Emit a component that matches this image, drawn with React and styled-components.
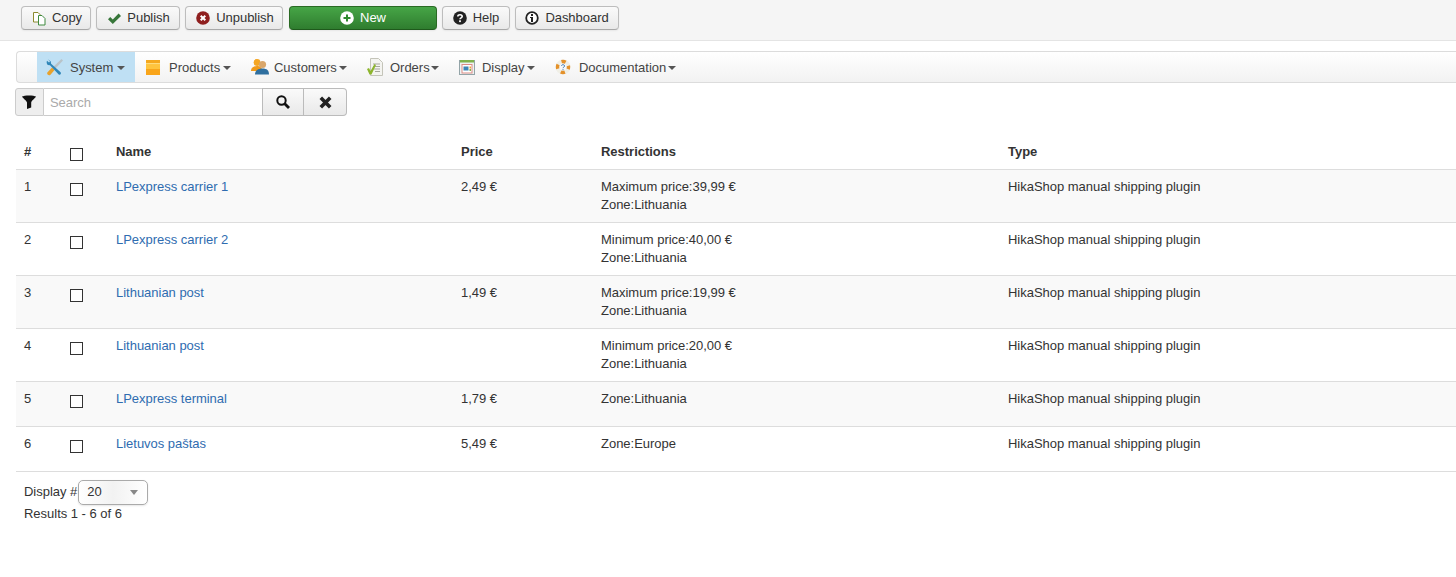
import React from "react";
import styled, { createGlobalStyle } from "styled-components";

const Global = createGlobalStyle`
  html, body { margin: 0; padding: 0; background: #fff; }
  body { font-family: "Liberation Sans", Arial, sans-serif; font-size: 13px; letter-spacing: -.02px; line-height: 18px; color: #333; overflow: hidden; }
  * { box-sizing: border-box; }
`;

const Page = styled.div`width: 1456px; height: 577px; overflow: hidden;`;

const Toolbar = styled.div`
  display: flex; gap: 5px; height: 41px; padding: 6px 0 0 21px;
  background: #f5f5f5; border-bottom: 1px solid #e4e4e4;
`;
const ToolButton = styled.button`
  display: flex; align-items: center; justify-content: center; gap: 6px;
  width: ${p => p.$w}px; height: 24px; padding: 0 0 2px ${p => p.$pl || 0}px; margin-right: ${p => p.$mr || 0}px;
  font: 13px "Liberation Sans", Arial, sans-serif; letter-spacing: -.04px;
  color: ${p => p.$primary ? "#fff" : "#333"};
  border: 1px solid ${p => p.$primary ? "#2a6a24" : "#bdbdbd"};
  border-bottom-color: ${p => p.$primary ? "#1f5a1c" : "#a8a8a8"};
  border-radius: 4px;
  background: ${p => p.$primary ? "linear-gradient(#46a546,#2f7d2f)" : "linear-gradient(#fafafa,#e9e9e9)"};
  box-shadow: 0 1px 2px rgba(0,0,0,.06);
  svg { flex: none; margin-top: 2px; }
`;

const Menu = styled.nav`
  display: flex; align-items: stretch; height: 32px; margin: 10px 0 5px 16px; padding-left: 20px;
  border: 1px solid #dcdcdc; border-right: 0; border-radius: 4px 0 0 4px;
  background: linear-gradient(#fff,#f2f2f2);
`;
const MenuItem = styled.div`
  display: flex; align-items: center; width: ${p => p.$w}px; padding-left: ${p => p.$pl}px;
  color: #444; padding-top: 1px;
  background: ${p => p.$active ? "#bfe0f4" : "transparent"};
  svg { flex: none; margin-right: ${p => p.$gap}px; margin-top: -1px; }
`;
const Caret = styled.span`
  width: 0; height: 0; margin-left: ${p => p.$ml}px; margin-top: 1px;
  border-left: 4px solid transparent; border-right: 4px solid transparent; border-top: 4px solid #555;
`;

const Filter = styled.div`display: flex; height: 28px; margin-left: 15px; width: 332px;`;
const AddOn = styled.div`
  display: flex; align-items: center; justify-content: center; width: 29px;
  background: #eee; border: 1px solid #ccc; border-radius: 3px 0 0 3px;
`;
const SearchInput = styled.div`
  width: 219px; padding: 1px 0 0 6px; display: flex; align-items: center;
  border-top: 1px solid #ccc; border-bottom: 1px solid #ccc; color: #aaa;
`;
const FilterButton = styled.div`
  display: flex; align-items: center; justify-content: center; width: ${p => p.$w}px;
  background: linear-gradient(#fafafa,#e9e9e9); border: 1px solid #bbb; border-left-width: ${p => p.$first ? 1 : 0}px;
  border-radius: ${p => p.$last ? "0 4px 4px 0" : "0"};
`;

const Table = styled.table`
  width: 1440px; margin: 17px 0 0 16px; border-collapse: collapse; table-layout: fixed; color: #333;
`;
const Th = styled.th`
  text-align: left; font-weight: bold; padding: 10px 8px 7px; height: 36px; line-height: 18px;
  vertical-align: top; border-bottom: 1px solid #ddd;
`;
const Row = styled.tr`background: ${p => p.$odd ? "#f9f9f9" : "#fff"};`;
const Td = styled.td`
  padding: 8px; line-height: 18px; vertical-align: top; border-bottom: 1px solid #ddd;
  height: ${p => p.$h}px;
`;
const Check = styled.span`
  display: block; width: 13px; height: 13px; margin: 5px 0 0;
  background: #fff; border: 1px solid #333;
`;
const NameLink = styled.a`color: #2f6cb0; text-decoration: none;`;

const Footer = styled.div`padding: 8px 0 0 24px;`;
const DisplayLine = styled.div`display: flex; align-items: center; height: 25px;`;
const Select = styled.div`
  position: relative; width: 70px; height: 25px; margin-left: 1px; padding-left: 8px; display: flex; align-items: center;
  border: 1px solid #aaa; border-radius: 5px; background: linear-gradient(90deg,#fff,#f2f2f2 50%,#fff); color: #333;
  box-shadow: 0 1px 2px rgba(0,0,0,.1);
  &::after { content: ""; position: absolute; right: 9px; top: 9px;
    border-left: 4px solid transparent; border-right: 4px solid transparent; border-top: 5px solid #888; }
`;
const Results = styled.div`margin-top: 0;`;

const IconCopy = () => (
  <svg width="14" height="15" viewBox="0 0 14 15" fill="none">
    <path d="M1.500 1.500h4.500l2 2v7.500h-6.500z" fill="#fff" stroke="#8c8a2e" />
    <path d="M6.500 4.500h3.500l3 3v6.500h-6.500z" fill="#fff" stroke="#3f8a3f" />
  </svg>
);
const IconCheck = () => (
  <svg width="13" height="13" viewBox="0 0 13 13"><path d="M0 7.300l2.200-2.200 2.600 2.500L10.600 1.500 13 3.900 4.800 12z" fill="#37763a" /></svg>
);
const IconCircleX = () => (
  <svg width="14" height="14" viewBox="0 0 14 14"><circle cx="7" cy="7" r="6.800" fill="#8f1f1f" /><path d="M4.700 4.700l4.600 4.600M9.300 4.700l-4.600 4.600" stroke="#fff" strokeWidth="2" /></svg>
);
const IconCirclePlus = () => (
  <svg width="14" height="14" viewBox="0 0 14 14"><circle cx="7" cy="7" r="6.800" fill="#fff" /><path d="M7 3.500v7M3.500 7h7" stroke="#2f8a2f" strokeWidth="2" /></svg>
);
const IconHelp = () => (
  <svg width="14" height="14" viewBox="0 0 14 14"><circle cx="7" cy="7" r="6.800" fill="#222" /><path d="M4.800 5.500C5 3.200 9.200 3.300 9.200 5.500 9.200 7 7 6.800 7 8.300" fill="none" stroke="#fff" strokeWidth="1.600" /><rect x="6.100" y="9.300" width="1.800" height="1.800" fill="#fff" /></svg>
);
const IconInfo = () => (
  <svg width="14" height="14" viewBox="0 0 14 14"><circle cx="7" cy="7" r="5.800" fill="#fff" stroke="#222" strokeWidth="1.800" /><rect x="6" y="6" width="2" height="5" fill="#222" /><rect x="6" y="3" width="2" height="2" fill="#222" /><rect x="5" y="6" width="2" height="1" fill="#222" /></svg>
);
const IconTools = () => (
  <svg width="18" height="18" viewBox="0 0 18 18">
    <path d="M15.500 1l1.500 1.500-9 9.500-2-2z" fill="#b9c3c9" />
    <path d="M6 9.500l2.500 2.500-4 4.700c-1 1-3 .6-3.300-.9-.2-.8 0-1.300.6-1.800z" fill="#e8a22c" />
    <path d="M1.800 1l3 2.500.3 2.300 9.500 8.500c1 1.200-.4 3.300-1.900 2.300L4 7.200 1.800 7C.5 5.500.4 3.800 1 2.700L3 4.500l1-1z" fill="#2f86b8" />
  </svg>
);
const IconBox = () => (
  <svg width="16" height="17" viewBox="0 0 16 17">
    <path d="M2 1h12l1 1v14H1V2z" fill="#fdb21f" />
    <path d="M1 1h14v3H1z" fill="#f5a81e" />
    <path d="M1 4h14v1.500H1z" fill="#ffdb7a" />
    <path d="M1 5.500h14V10H1z" fill="#ffc43d" />
    <path d="M1 10h14v6H1z" fill="#f9a51a" />
  </svg>
);
const IconUsers = () => (
  <svg width="18" height="18" viewBox="0 0 18 18">
    <circle cx="6" cy="4.500" r="3.400" fill="#f5a623" />
    <path d="M0 13c0-3.500 3-5 6-5s5 1 5 5z" fill="#f09a1a" />
    <circle cx="11.500" cy="6.500" r="3.600" fill="#d9a66a" />
    <path d="M4 16.500c0-4 3-6 7.500-6s6.500 2 6.500 6z" fill="#2f6f9f" />
  </svg>
);
const IconOrders = () => (
  <svg width="16" height="18" viewBox="0 0 16 18">
    <path d="M3.500 .500h8l4 4v13h-12z" fill="#f4f4f0" stroke="#c4c4b9" />
    <path d="M6 6h7M6 8.500h7M7 11h6M8 13.500h5" stroke="#a7a79c" />
    <path d="M0 11l2-1 1.500 3L7.500 6 9 7l-4.500 9.500H2.500z" fill="#8db52d" />
  </svg>
);
const IconDisplay = () => (
  <svg width="16" height="16" viewBox="0 0 16 16">
    <rect x=".5" y="1.500" width="15" height="14" fill="#eef2f3" stroke="#93a4a8" />
    <rect x="1" y="1" width="14" height="2.500" fill="#7fb24d" />
    <rect x="3" y="5.500" width="10" height="8.500" fill="#fff" stroke="#d98b84" />
    <rect x="4.500" y="7.500" width="5" height="4" fill="#3c86b8" />
    <rect x="10.500" y="7.500" width="1.500" height="2" fill="#e9a43a" />
    <rect x="10.500" y="10" width="1.500" height="2" fill="#7fb24d" />
  </svg>
);
const IconDoc = () => (
  <svg width="16" height="16" viewBox="0 0 16 16">
    <circle cx="8" cy="8" r="5.500" fill="none" stroke="#f0efe6" strokeWidth="4" />
    <circle cx="8" cy="8" r="5.500" fill="none" stroke="#e4912a" strokeWidth="3.400" strokeDasharray="4.300 4.340" strokeDashoffset="2.200" />
    <path d="M6.400 6.800c.2-1.500 3.300-1.400 3.200.2 0 1-1.600 1-1.600 2.200M8 10.200v1" fill="none" stroke="#3a77b0" strokeWidth="1" />
  </svg>
);
const IconFunnel = () => (
  <svg width="14" height="14" viewBox="0 0 14 14"><path d="M0 1.500C2 0 12 0 14 1.500c0 1-4.500 4-4.800 6v5L5 14V7.500C4.500 5.500 0 2.500 0 1.500z" fill="#111" /></svg>
);
const IconSearch = () => (
  <svg width="14" height="14" viewBox="0 0 14 14" fill="none"><circle cx="5.500" cy="5.500" r="4.200" stroke="#111" strokeWidth="2" /><path d="M8.500 8.500l4.500 4.500" stroke="#111" strokeWidth="2.800" /></svg>
);
const IconClear = () => (
  <svg width="13" height="13" viewBox="0 0 13 13"><path d="M1.800 1.800l9.400 9.400M11.200 1.800l-9.400 9.400" stroke="#222" strokeWidth="3.600" /></svg>
);

const tools = [
  { label: "Copy", w: 70, pl: 2, icon: <IconCopy /> },
  { label: "Publish", w: 84, pl: 2, icon: <IconCheck /> },
  { label: "Unpublish", w: 98, pl: 2, mr: 1, icon: <IconCircleX /> },
  { label: "New", w: 148, primary: true, icon: <IconCirclePlus /> },
  { label: "Help", w: 68, icon: <IconHelp /> },
  { label: "Dashboard", w: 104, icon: <IconInfo /> },
];
const menu = [
  { label: "System", w: 98, pl: 9, gap: 6, cm: 4, active: true, icon: <IconTools /> },
  { label: "Products", w: 105, pl: 10, gap: 8, cm: 3, icon: <IconBox /> },
  { label: "Customers", w: 117, pl: 11, gap: 5, cm: 2, icon: <IconUsers /> },
  { label: "Orders", w: 92, pl: 10, gap: 7, cm: 1, icon: <IconOrders /> },
  { label: "Display", w: 95, pl: 10, gap: 7, cm: 2, icon: <IconDisplay /> },
  { label: "Documentation", w: 140, pl: 11, gap: 8, cm: 2, icon: <IconDoc /> },
];
const rows = [
  { n: 1, name: "LPexpress carrier 1", price: "2,49 €", r: ["Maximum price:39,99 €", "Zone:Lithuania"], h: 53 },
  { n: 2, name: "LPexpress carrier 2", price: "", r: ["Minimum price:40,00 €", "Zone:Lithuania"], h: 53 },
  { n: 3, name: "Lithuanian post", price: "1,49 €", r: ["Maximum price:19,99 €", "Zone:Lithuania"], h: 53 },
  { n: 4, name: "Lithuanian post", price: "", r: ["Minimum price:20,00 €", "Zone:Lithuania"], h: 53 },
  { n: 5, name: "LPexpress terminal", price: "1,79 €", r: ["Zone:Lithuania"], h: 45 },
  { n: 6, name: "Lietuvos paštas", price: "5,49 €", r: ["Zone:Europe"], h: 45 },
];

export default function App() {
  return (
    <Page>
      <Global />
      <Toolbar>
        {tools.map(t => (
          <ToolButton key={t.label} $w={t.w} $pl={t.pl} $mr={t.mr} $primary={t.primary}>{t.icon}{t.label}</ToolButton>
        ))}
      </Toolbar>
      <Menu>
        {menu.map(m => (
          <MenuItem key={m.label} $w={m.w} $pl={m.pl} $gap={m.gap} $active={m.active}>{m.icon}{m.label}<Caret $ml={m.cm} /></MenuItem>
        ))}
      </Menu>
      <Filter>
        <AddOn><IconFunnel /></AddOn>
        <SearchInput>Search</SearchInput>
        <FilterButton $w={42} $first><IconSearch /></FilterButton>
        <FilterButton $w={43} $last><IconClear /></FilterButton>
      </Filter>
      <Table>
        <colgroup>
          <col width="46" /><col width="46" /><col width="345" /><col width="140" /><col width="407" /><col />
        </colgroup>
        <thead>
          <tr>
            <Th>#</Th><Th><Check /></Th><Th>Name</Th><Th>Price</Th><Th>Restrictions</Th><Th>Type</Th>
          </tr>
        </thead>
        <tbody>
          {rows.map(r => (
            <Row key={r.n} $odd={r.n % 2 === 1}>
              <Td $h={r.h}>{r.n}</Td>
              <Td $h={r.h}><Check /></Td>
              <Td $h={r.h}><NameLink>{r.name}</NameLink></Td>
              <Td $h={r.h}>{r.price}</Td>
              <Td $h={r.h}>{r.r.map(x => <div key={x}>{x}</div>)}</Td>
              <Td $h={r.h}>HikaShop manual shipping plugin</Td>
            </Row>
          ))}
        </tbody>
      </Table>
      <Footer>
        <DisplayLine>Display #<Select>20</Select></DisplayLine>
        <Results>Results 1 - 6 of 6</Results>
      </Footer>
    </Page>
  );
}
